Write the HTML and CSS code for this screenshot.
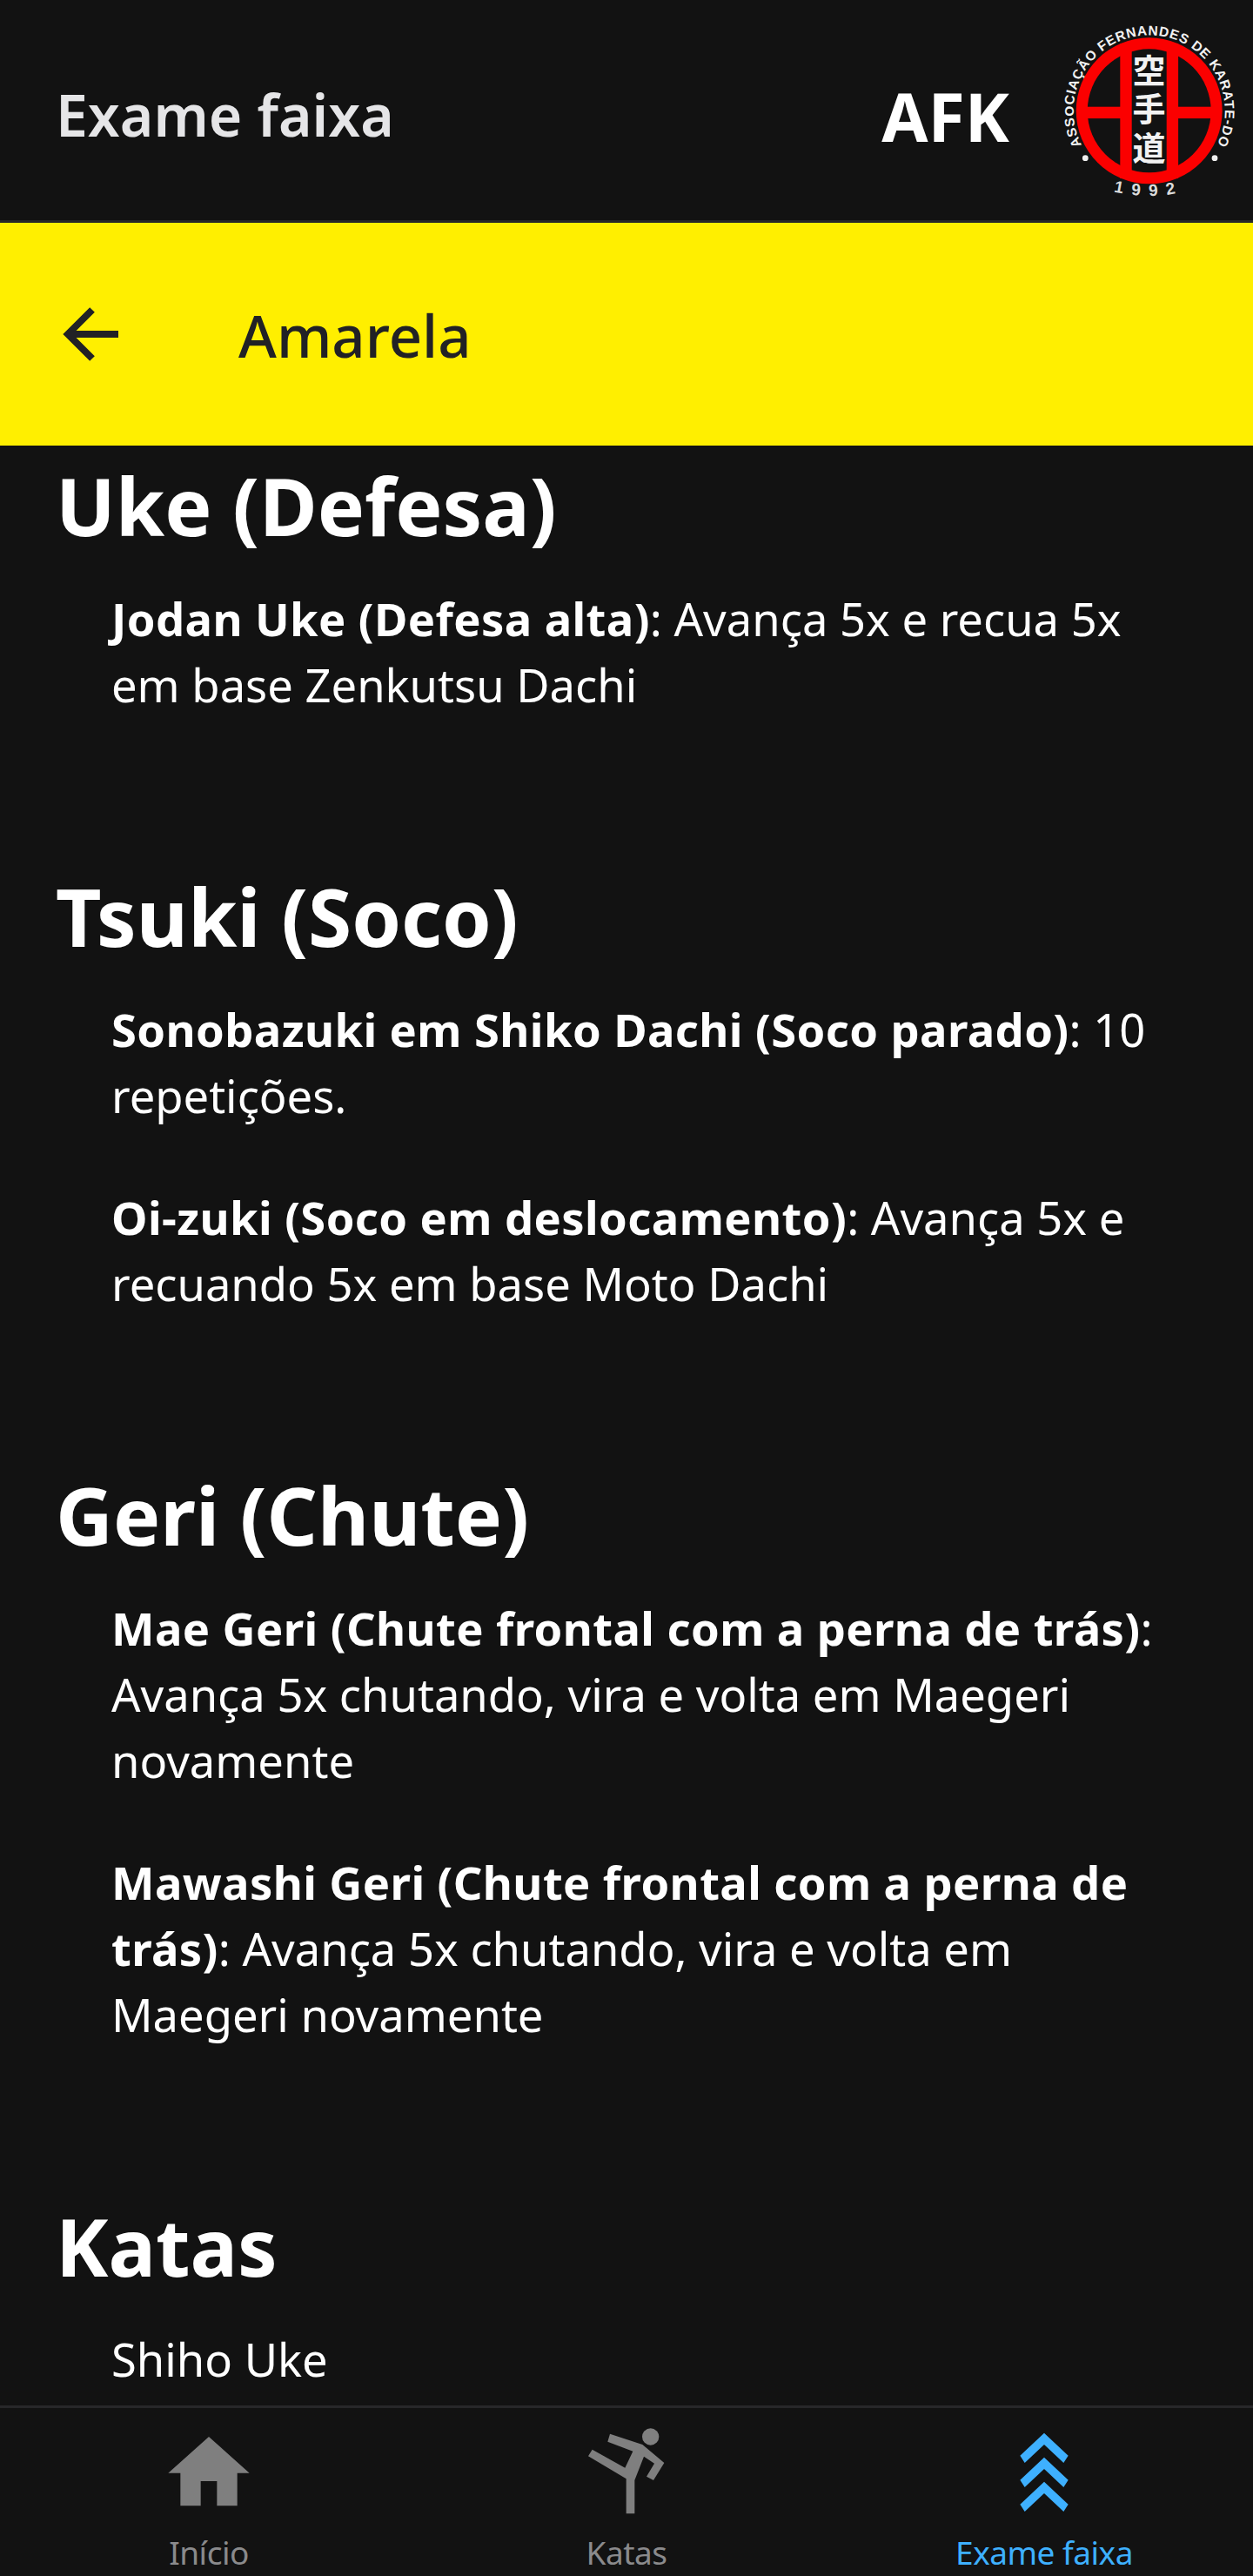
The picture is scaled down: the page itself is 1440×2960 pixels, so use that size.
FILE: index.html
```html
<!DOCTYPE html>
<html lang="pt-BR">
<head>
  <meta charset="UTF-8">
  <meta name="viewport" content="width=device-width, initial-scale=1.0">
  <title>Exame faixa</title>
  <link rel="stylesheet" href="styles.css">
</head>
<body>
  <header class="topbar">
    <h1 class="topbar-title">Exame faixa</h1>
    <span class="topbar-brand">AFK</span>
    <svg class="logo" viewBox="0 0 220 220" aria-label="Associação Fernandes de Karate-Do">
      <defs>
        <path id="ringTop" d="M 39.400 157.200 A 87 87 0 1 1 182 157.200"/>
        <path id="ringBottom" d="M 55 196 Q 110.700 214 166 196"/>
      </defs>
      <circle class="logo-red" cx="110.700" cy="107.300" r="84"/>
      <circle class="logo-black" cx="110.700" cy="107.300" r="71"/>
      <rect class="logo-red" x="77.300" y="30" width="13.400" height="155"/>
      <rect class="logo-red" x="130.700" y="30" width="13.400" height="155"/>
      <rect class="logo-red" x="36" y="102.700" width="42" height="13.400"/>
      <rect class="logo-red" x="143" y="102.700" width="42" height="13.400"/>
      <text class="logo-kanji" x="110.500" y="75">空</text>
      <text class="logo-kanji" x="110.500" y="119">手</text>
      <text class="logo-kanji" x="110.500" y="164">道</text>
      <text class="logo-ring"><textPath href="#ringTop" startOffset="50%" text-anchor="middle">ASSOCIAÇÃO FERNANDES DE KARATE-DO</textPath></text>
      <text class="logo-year"><textPath href="#ringBottom" startOffset="50%" text-anchor="middle">1992</textPath></text>
      <circle class="logo-dot" cx="37.300" cy="161.700" r="3.400"/>
      <circle class="logo-dot" cx="186" cy="161.700" r="3.400"/>
    </svg>
  </header>

  <div class="subbar">
    <svg class="back" viewBox="0 0 84 76">
      <path d="M40 10 L12 38 L40 66 M12 38 H70"/>
    </svg>
    <h2 class="subbar-title">Amarela</h2>
  </div>

  <main class="content">
    <section class="group">
      <h3>Uke (Defesa)</h3>
      <ul>
        <li><b>Jodan Uke (Defesa alta)</b>: Avança 5x e recua 5x<br>em base Zenkutsu Dachi</li>
      </ul>
    </section>
    <section class="group">
      <h3>Tsuki (Soco)</h3>
      <ul>
        <li><b>Sonobazuki em Shiko Dachi (Soco parado)</b>: 10<br>repetições.</li>
        <li><b>Oi-zuki (Soco em deslocamento)</b>: Avança 5x e<br>recuando 5x em base Moto Dachi</li>
      </ul>
    </section>
    <section class="group">
      <h3>Geri (Chute)</h3>
      <ul>
        <li><b>Mae Geri (Chute frontal com a perna de trás)</b>:<br>Avança 5x chutando, vira e volta em Maegeri<br>novamente</li>
        <li><b>Mawashi Geri (Chute frontal com a perna de<br>trás)</b>: Avança 5x chutando, vira e volta em<br>Maegeri novamente</li>
      </ul>
    </section>
    <section class="group">
      <h3>Katas</h3>
      <ul>
        <li>Shiho Uke</li>
      </ul>
    </section>
  </main>

  <nav class="tabs">
    <a class="tab">
      <svg class="tab-icon" viewBox="0 60 420 300">
        <path d="M210 90 L350 215 H308 V328 H238 V243 H182 V328 H112 V215 H70 Z"/>
      </svg>
      <span>Início</span>
    </a>
    <a class="tab">
      <svg class="tab-icon" viewBox="0 60 420 300">
        <circle cx="293" cy="90" r="29"/>
        <path d="M153 80 L265 117 L340 180 L303 240 L279 227 L306 182 L270 158 L238 240 V355 H209 V235 L78 157 L92 134 L205 197 L232 140 L145 107 Z"/>
      </svg>
      <span>Katas</span>
    </a>
    <a class="tab active">
      <svg class="tab-icon" viewBox="120 60 420 300">
        <path d="M330 77 L413 155 L397 180 L330 117 L263 180 L247 155 Z"/>
        <path d="M330 161 L413 239 L397 264 L330 201 L263 264 L247 239 Z"/>
        <path d="M330 245 L413 323 L397 348 L330 285 L263 348 L247 323 Z"/>
      </svg>
      <span>Exame faixa</span>
    </a>
  </nav>
</body>
</html>
```

FILE: styles.css
```css
* {
  box-sizing: border-box;
}
html, body {
  height: 100%;
}
body {
  margin: 0;
  display: flex;
  flex-direction: column;
  overflow: hidden;
  background: #121212;
  color: #fff;
  font-family: "Noto Sans", "Open Sans", sans-serif;
}

.topbar {
  height: 256px;
  flex: none;
  display: flex;
  align-items: center;
  padding-left: 64px;
  border-bottom: 3px solid #272729;
}
.topbar-title {
  margin: 8px 0 0;
  flex: 1;
  font-size: 66px;
  font-weight: 600;
  color: #e5e5e7;
}
.topbar-brand {
  margin: 14px 50px 0 0;
  font-size: 77px;
  font-weight: 700;
}
.logo {
  width: 220px;
  height: 220px;
  margin: 7px 10px 0 0;
  flex: none;
}
.logo-red {
  fill: #fb0000;
}
.logo-black {
  fill: #121212;
}
.logo-dot {
  fill: #f0f0f0;
}
.logo-kanji {
  font-family: "Noto Sans CJK JP", sans-serif;
  font-size: 38px;
  font-weight: 700;
  fill: #f2f2f2;
  text-anchor: middle;
}
.logo-ring {
  font-family: "Liberation Sans", sans-serif;
  font-size: 15.500px;
  font-weight: 700;
  letter-spacing: 0.800px;
  fill: #f2f2f2;
}
.logo-year {
  font-family: "Liberation Sans", sans-serif;
  font-size: 19px;
  font-weight: 700;
  letter-spacing: 10px;
  fill: #dcdcdc;
}

.subbar {
  height: 256px;
  flex: none;
  display: flex;
  align-items: center;
  padding-left: 66px;
  background: #ffef00;
  color: #212125;
}
.back {
  width: 84px;
  height: 76px;
  fill: none;
  stroke: #212125;
  stroke-width: 8;
}
.subbar-title {
  margin: 2px 0 0 124px;
  font-size: 67px;
  font-weight: 500;
}

.content {
  flex: 1;
  min-height: 0;
  overflow: hidden;
  padding: 14px 50px 0 64px;
}
.group {
  margin-bottom: 173px;
}
.group h3 {
  margin: 0 0 37px;
  font-size: 91px;
  line-height: 110px;
  font-weight: 700;
}
.group ul {
  margin: 0;
  padding: 0 0 0 64px;
  list-style: none;
  display: flex;
  flex-direction: column;
  gap: 64px;
}
.group li {
  font-size: 52.500px;
  line-height: 76px;
  white-space: nowrap;
}
.group b {
  font-weight: 700;
  letter-spacing: 0.400px;
}

.tabs {
  height: 196px;
  flex: none;
  display: flex;
  border-top: 3px solid #272729;
  background: #121212;
}
.tab {
  flex: 1;
  display: flex;
  flex-direction: column;
  align-items: center;
  padding-top: 23px;
  color: #8a8a8c;
  fill: #7f7f7f;
  font-size: 37px;
  line-height: 52px;
  letter-spacing: -0.500px;
}
.tab-icon {
  width: 140px;
  height: 100px;
  margin-bottom: 17px;
}
.tab.active {
  color: #3eb0ff;
  fill: #3eb0ff;
}
```
